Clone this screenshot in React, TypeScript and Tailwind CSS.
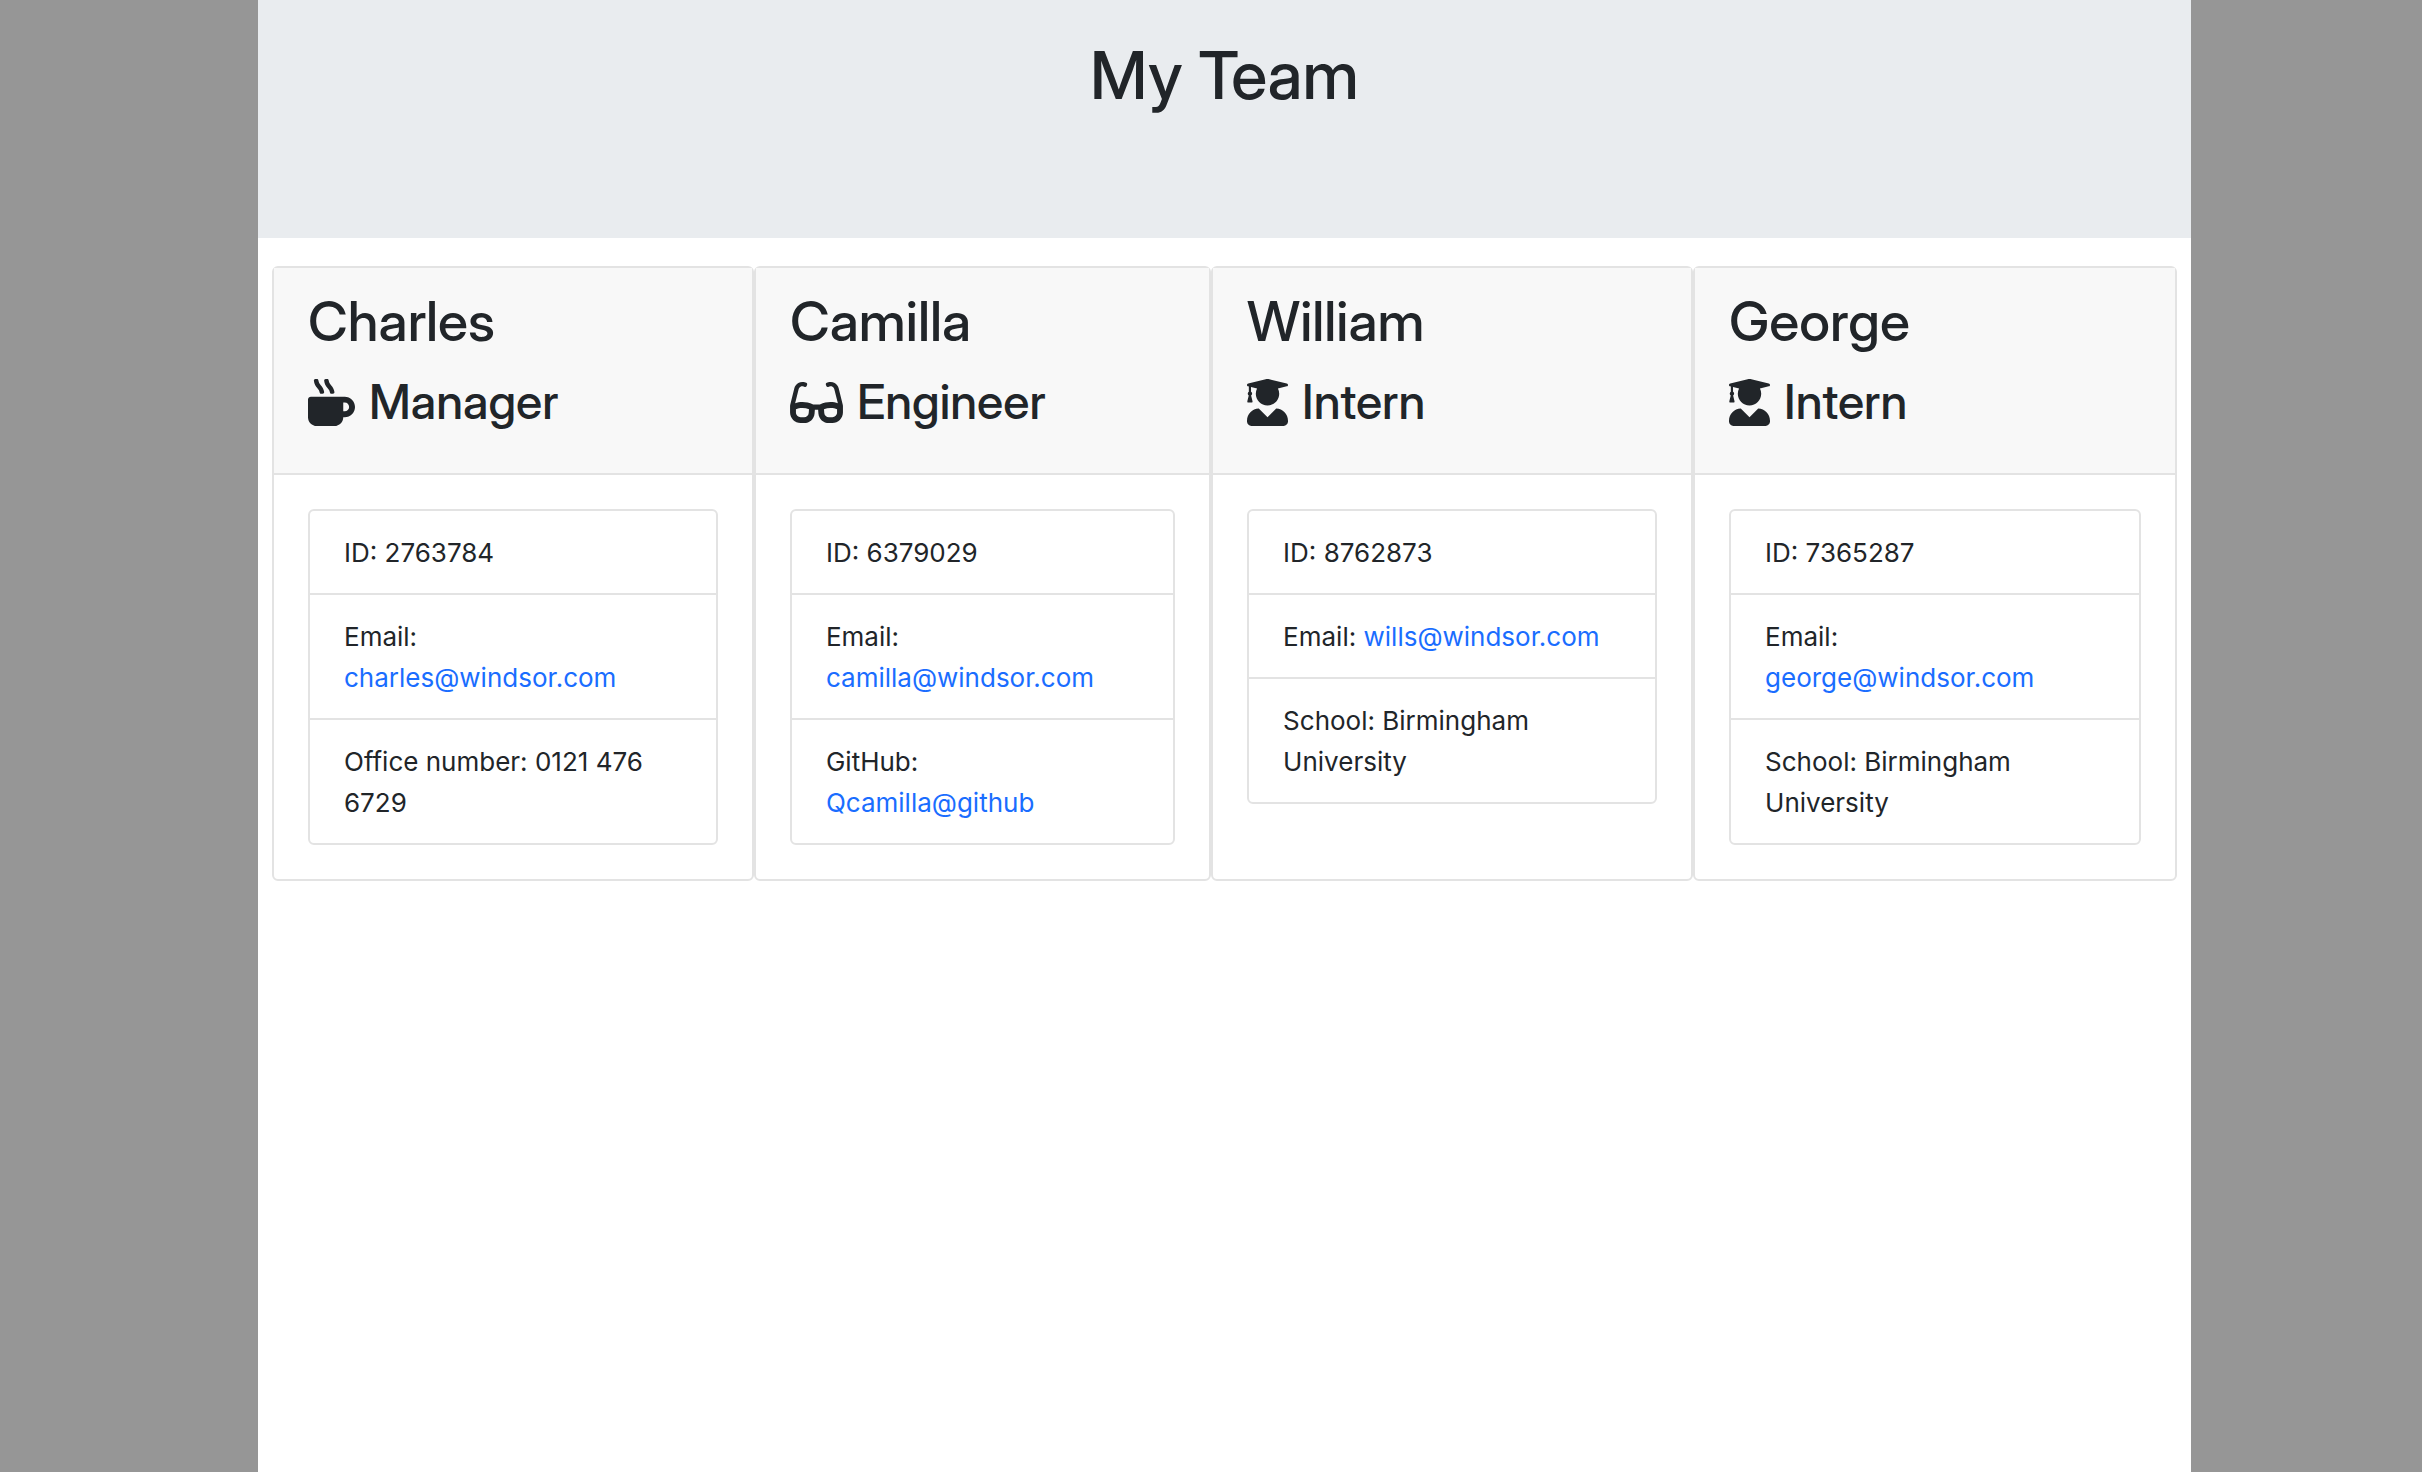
import React from "react";
import { FaMugHot, FaGlasses, FaUserGraduate } from "react-icons/fa";

type Row = { label: string; value: string; href?: string };
type Member = { name: string; role: "Manager" | "Engineer" | "Intern"; width: string; rows: Row[] };

const team: Member[] = [
  { name: "Charles", role: "Manager", width: "grow-[482]", rows: [
    { label: "ID:", value: "2763784" },
    { label: "Email:", value: "charles@windsor.com", href: "mailto:charles@windsor.com" },
    { label: "Office number:", value: "0121 476 6729" } ] },
  { name: "Camilla", role: "Engineer", width: "grow-[457]", rows: [
    { label: "ID:", value: "6379029" },
    { label: "Email:", value: "camilla@windsor.com", href: "mailto:camilla@windsor.com" },
    { label: "GitHub:", value: "Qcamilla@github", href: "https://github.com/Qcamilla" } ] },
  { name: "William", role: "Intern", width: "grow-[482]", rows: [
    { label: "ID:", value: "8762873" },
    { label: "Email:", value: "wills@windsor.com", href: "mailto:wills@windsor.com" },
    { label: "School:", value: "Birmingham University" } ] },
  { name: "George", role: "Intern", width: "grow-[484]", rows: [
    { label: "ID:", value: "7365287" },
    { label: "Email:", value: "george@windsor.com", href: "mailto:george@windsor.com" },
    { label: "School:", value: "Birmingham University" } ] },
];

const icons = {
  Manager: <FaMugHot className="h-[47px] w-[47px] shrink-0" />,
  Engineer: <FaGlasses className="h-[47px] w-[53px] shrink-0" />,
  Intern: <FaUserGraduate className="h-[47px] w-[41px] shrink-0" />,
};

function Card({ member }: { member: Member }) {
  return (
    <article className={`${member.width} basis-0 min-w-0 rounded-md border-2 border-[#e3e3e3] bg-white`}>
      <header className="border-b-2 border-[#e3e3e3] bg-[#f8f8f8] px-[34px] pt-[22px] pb-[39px] font-['Inter_Display',Inter,sans-serif]">
        <h2 className="text-[55px] font-medium leading-[62px]">{member.name}</h2>
        <h3 className="mt-[18px] flex items-center gap-[14px] text-[48px] font-medium leading-[64px]">
          {icons[member.role]}
          {member.role}
        </h3>
      </header>
      <div className="p-[34px]">
        <ul className="divide-y-2 divide-[#e3e3e3] rounded-md border-2 border-[#e3e3e3]">
          {member.rows.map((r) => (
            <li key={r.label} className="pt-[21px] pr-[42px] pb-5 pl-[34px] leading-[41px]">
              {r.href ? (
                <>{r.label} <a href={r.href} className="text-[#1a6dff]">{r.value}</a></>
              ) : (
                `${r.label} ${r.value}`
              )}
            </li>
          ))}
        </ul>
      </div>
    </article>
  );
}

export default function App() {
  return (
    <div className="flex min-h-screen bg-[#969696] pr-[231px] pl-[258px] font-[Inter,sans-serif] text-[26px] text-[#212529]">
      <main className="grow bg-white">
        <div className="bg-[#e9ecef] pt-[35px] pb-[123px] text-center font-['Inter_Display',Inter,sans-serif]">
          <h1 className="text-[66px] font-medium leading-[80px]">My Team</h1>
        </div>
        <section className="mt-7 flex px-[14px]">
          {team.map((m) => <Card key={m.name} member={m} />)}
        </section>
      </main>
    </div>
  );
}
